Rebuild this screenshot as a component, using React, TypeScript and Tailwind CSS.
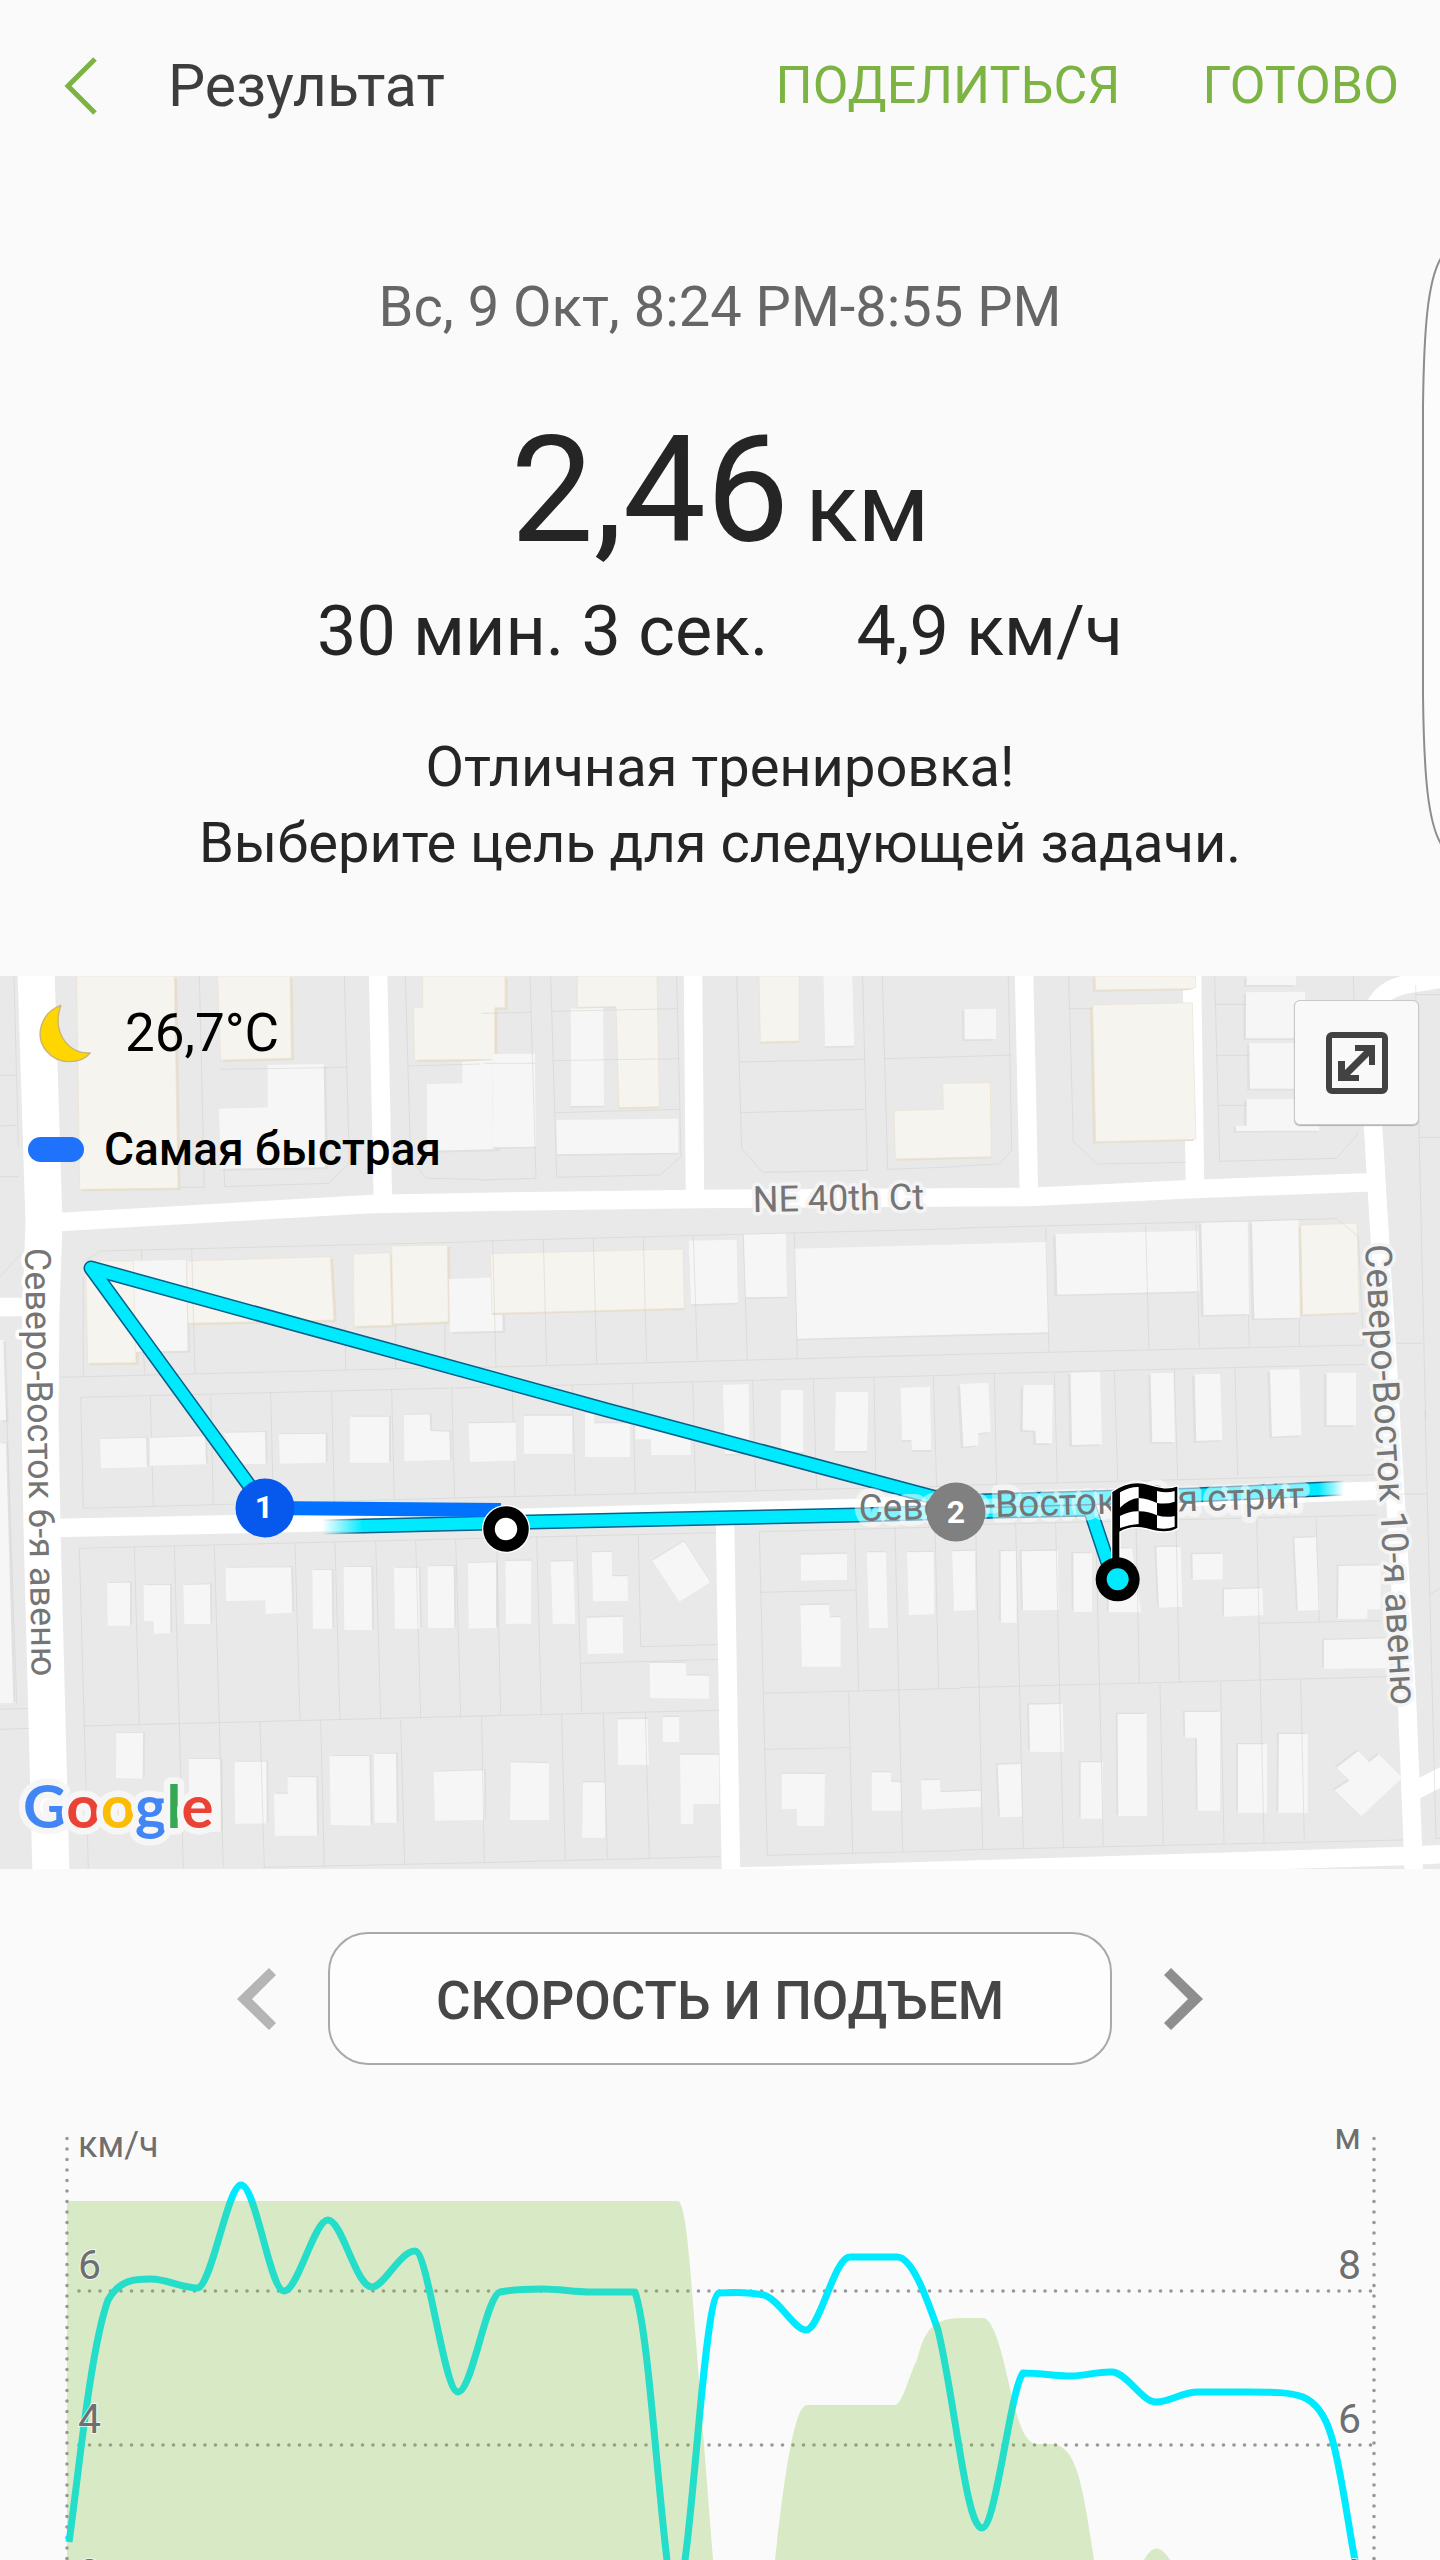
type Tile = {
  x: number;
  y: number;
  shadow: string;
  plain: string[];
  warm: string[];
  parcels: string;
};

/* Map data, stored per tile at three units to a map pixel. */
const tiles: Tile[] = [
  {
    x: 0,
    y: 960,
    shadow: "translate(8 6)",
    plain: [
      "803,315 971,312 976,622 662,626 657,446 803,442",
      "1387,305 1486,300 1490,568 1281,572 1281,372 1387,370",
      "400,903 558,900 563,1172 405,1175",
      "1347,957 1505,952 1508,1112 1350,1116",
      "0,1140 10,1140 18,1380 0,1380",
    ],
    warm: [
      "230,48 523,48 534,684 239,688",
      "653,48 870,48 874,295 662,300",
      "1268,48 1515,48 1515,143 1484,143 1484,298 1243,300 1241,143 1268,142",
      "560,903 991,890 1002,1080 564,1090",
      "257,903 400,903 408,1208 263,1210",
      "1060,882 1170,878 1176,1096 1062,1099",
      "1175,858 1342,855 1345,1085 1180,1092",
    ],
    parcels:
      "M42 48L55 560M0 346H48M0 498L50 496M0 650H55M60 885L0 950M598 48L613 682H540M662 328L1040 322M1033 48L1048 610L985 670L674 680L672 626M1216 48L1232 600L1280 655L1440 658M1225 318L1440 312M250 950V1245M260 900L300 873L1440 845M425 870V903M430 1175L435 1245M575 865L585 1240M1035 1100L1037 1230M1187 1090V1225M1335 1090V1220M180 1252L1440 1220M242 1312L1440 1282M242 1312L250 1645M451 1308L460 1640M632 1303L640 1635M812 1298L820 1630M995 1292L1003 1625M1175 1287L1183 1618M1355 1284L1364 1615M250 1645L1440 1612",
  },
  {
    x: 480,
    y: 960,
    shadow: "translate(0 5)",
    plain: [
      "36,282 165,281 168,560 39,562",
      "272,146 370,144 372,437 273,438",
      "229,480 595,476 595,578 231,583",
      "1030,48 1117,48 1123,257 1035,259",
      "626,842 770,839 774,1028 633,1033",
      "790,822 918,820 921,1010 796,1012",
      "942,866 1700,846 1706,1117 952,1136",
      "728,1275 806,1272 809,1480 735,1482",
      "902,1290 969,1290 970,1476 903,1478",
      "1067,1296 1165,1296 1162,1473 1064,1473",
      "1262,1283 1350,1280 1354,1470 1296,1470 1294,1440 1266,1440",
    ],
    warm: [
      "292,48 531,48 538,440 417,443 408,140 292,142",
      "837,48 958,48 958,243 841,246",
      "1388,370 1531,368 1534,590 1246,597 1242,452 1390,448",
      "31,881 609,867 613,1045 36,1060",
    ],
    parcels:
      "M150 48L168 655L0 660M212 48L230 652L540 645L603 590L590 48M218 154L590 146M220 302L597 296M228 458L598 448M5 160L155 157M10 310H165M770 48L785 565L848 637L1162 631L1148 48M1207 48L1223 628L1440 620M780 306L1155 298M783 458L1155 448M1213 296L1440 290M0 843L1440 806M38 843L48 1220M190 840L200 1215M340 836L350 1212M490 832L500 1206M640 828L652 1200M790 824L802 1198M943 820L952 1195M0 1222L1440 1183M0 1282L1440 1245M97 1280L105 1612M277 1275L286 1606M458 1270L466 1600M638 1266L647 1597M818 1261L827 1592M1000 1257L1010 1588M1182 1252L1188 1583M1360 1249L1370 1580M0 1612L1440 1578",
  },
  {
    x: 960,
    y: 960,
    shadow: "translate(-8 5)",
    plain: [
      "13,148 108,146 108,237 14,238",
      "860,48 1008,48 1008,75 860,75",
      "858,97 1035,95 1035,235 858,235",
      "868,249 1060,249 1060,386 870,386",
      "860,417 1078,417 1078,512 828,513 828,497 860,497",
      "287,822 715,812 718,994 292,1004",
      "724,788 863,785 867,1062 731,1065",
      "876,785 1015,780 1020,1073 883,1076",
      "0,1272 85,1268 92,1415 55,1420 55,1456 10,1460",
      "190,1275 279,1275 276,1450 228,1450 226,1412 188,1410",
      "332,1238 420,1236 426,1453 336,1455",
      "572,1240 640,1238 645,1446 577,1446",
      "704,1243 780,1241 787,1440 709,1443",
      "930,1230 1018,1228 1024,1426 936,1430",
      "1100,1238 1188,1238 1188,1396 1100,1396",
    ],
    warm: [
      "405,48 707,48 707,82 690,86 407,90",
      "398,135 697,128 708,538 407,545",
      "1022,795 1191,790 1198,1058 1028,1064",
    ],
    parcels:
      "M145 48L155 570L118 612L0 618M0 290L152 285M326 48L340 545L412 612L678 607M328 146H395M764 48L779 604L1130 595L1195 520M766 133H860M770 286H868M774 436H860M1180 48L1182 120M1367 75L1397 1380M1367 104H1440M1380 532H1440M1310 1150H1388M0 804L1130 776L1195 830L1210 1150M257 803L267 1175M557 795L567 1168M708 790L718 1162M865 1065L868 1160M1018 1070V1158M0 1183L1210 1155M0 1243L1215 1213M103 1242L110 1575M283 1238L292 1570M463 1232L473 1560M643 1228L653 1555M825 1225L833 1548M0 1576L1250 1544",
  },
  {
    x: 0,
    y: 1410,
    shadow: "translate(6 -3)",
    plain: [
      "0,100 18,100 40,878 0,880",
      "300,87 438,83 441,172 303,175",
      "450,83 615,78 618,163 450,167",
      "670,68 795,66 797,162 720,162",
      "837,73 977,71 977,158 840,161",
      "1050,20 1167,20 1167,158 1050,158",
      "1212,15 1289,13 1291,63 1348,65 1350,150 1213,153",
      "322,519 390,518 390,647 323,647",
      "431,525 510,525 511,670 462,671 461,634 432,633",
      "550,525 630,523 631,642 553,642",
      "677,473 873,472 877,608 797,612 796,571 678,573",
      "937,480 995,480 997,656 939,656",
      "1031,471 1114,471 1116,660 1033,660",
      "1182,473 1256,473 1260,656 1185,656",
      "1283,469 1361,468 1363,654 1284,655",
      "1404,460 1488,457 1488,654 1406,656",
      "349,970 429,968 428,1106 348,1104",
      "566,1047 662,1047 662,1265 570,1265",
      "704,1055 799,1055 800,1240 705,1241",
      "863,1102 949,1102 951,1277 825,1277 822,1151 863,1151",
      "989,1038 1108,1038 1112,1247 992,1245",
      "1122,1031 1188,1031 1190,1238 1124,1238",
      "1301,1085 1452,1081 1453,1230 1305,1232",
    ],
    warm: [],
    parcels:
      "M20 0L50 880M0 898L85 895M0 958L88 955M238 415L1440 385M238 415L265 1376M403 412L418 943M523 410L550 1376M643 407L670 1372M885 402L900 928M1005 398L1020 928M1127 394L1142 924M1247 390L1262 922M1367 388L1382 920M252 948L1440 918M780 935L793 1372M962 932L973 1368M1202 930L1214 1362M790 1372L1440 1358",
  },
  {
    x: 480,
    y: 1410,
    shadow: "translate(0 -4)",
    plain: [
      "-35,40 107,38 109,152 -30,156",
      "132,17 277,17 277,131 132,131",
      "315,10 343,10 343,40 450,40 450,141 315,141",
      "466,40 632,75 632,135 514,135 512,88 466,88",
      "76,453 154,452 154,641 77,641",
      "212,455 280,453 286,641 218,641",
      "335,427 395,426 397,499 443,499 444,573 339,574",
      "517,452 612,394 691,517 598,575",
      "320,623 428,620 430,730 323,732",
      "509,759 617,759 620,796 687,797 688,866 510,864",
      "413,928 503,927 507,1065 414,1065",
      "548,921 598,921 598,996 548,996",
      "600,1034 718,1034 717,1181 640,1183 640,1242 602,1242",
      "92,1057 207,1060 207,1230 90,1230",
      "309,1117 375,1117 375,1283 306,1283",
      "962,434 1101,431 1101,509 963,512",
      "1160,427 1218,427 1224,653 1167,655",
      "1281,427 1361,426 1363,613 1286,615",
      "961,586 1046,584 1051,622 1082,622 1082,770 966,770",
      "1416,424 1485,422 1487,600 1422,603",
      "905,1091 1035,1092 1033,1248 950,1248 950,1197 905,1197",
      "1175,1087 1232,1087 1234,1115 1263,1117 1263,1202 1175,1202",
      "1323,1111 1380,1110 1382,1147 1502,1142 1502,1190 1326,1199",
    ],
    warm: [],
    parcels:
      "M50 383L62 915M170 380L184 912M290 378L305 907M0 385L708 368M475 375L482 710L713 704M300 760L713 748M0 918L716 901M5 918L13 1358M245 915L256 1352M370 912L382 1348M496 908L508 1345M0 1358L720 1340M838 365L862 1336L1440 1322M838 365L1440 350M842 547L1130 540M1124 355L1136 840M1245 352L1268 1325M1365 350L1376 836M850 850L1440 835M1106 848L1118 1330M855 1018L1112 1013",
  },
  {
    x: 960,
    y: 1410,
    shadow: "translate(-6 -4)",
    plain: [
      "122,424 168,423 170,638 123,638",
      "185,424 294,422 296,600 189,601",
      "340,430 396,430 396,605 341,606",
      "480,415 516,415 543,607 446,607 446,540",
      "589,411 662,410 667,590 597,593",
      "697,433 788,431 788,508 699,509",
      "792,538 907,535 910,616 792,620",
      "1003,384 1068,382 1080,600 1014,602",
      "1136,468 1262,466 1262,597 1222,599 1222,626 1134,626",
      "1092,690 1290,685 1290,775 1092,776",
      "207,884 308,882 312,1026 210,1025",
      "113,1064 182,1062 186,1220 120,1222",
      "362,1057 428,1057 428,1226 362,1226",
      "473,912 560,912 561,1218 475,1218",
      "674,906 780,906 780,1202 713,1202 711,984 676,983",
      "834,1003 921,1003 921,1208 834,1208",
      "957,972 1043,972 1043,1209 955,1209",
      "1195,1023 1228,1057 1257,1033 1327,1103 1204,1219 1123,1141 1168,1112 1130,1073",
    ],
    warm: [],
    parcels:
      "M0 345L1250 315M47 345L68 1318M167 342L190 1314M287 340L310 1312M407 336L430 1308M528 334L538 820M648 331L658 818M890 326L912 1298M1068 322L1078 635M900 640L1262 632M0 833L1290 800M600 822L610 1302M782 816L792 1298M1022 810L1033 1294M0 1320L1330 1290M1395 0L1428 1285H1440M1250 252H1400M1410 552L1440 535",
  },
];

const streets = [
  "M60 1222L372 1204L480 1202L700 1199L1029 1197L1195 1189L1378 1182",
  "M378 970L383 1204",
  "M693 970L695 1199",
  "M1024 970L1029 1197",
  "M1192 970L1195 1189",
  "M1445 978L1408 984C1384 989 1373 1000 1373 1020L1373 1125L1377 1192L1391 1420L1407 1700L1414 1875",
  "M1410 1793L1445 1775",
  "M55 1528L480 1519L857 1508L1395 1490",
  "M725 1520L731 1875",
  "M725 1877L960 1870L1404 1856L1445 1854",
  "M-5 1307H24",
];

const legs = [
  "M322 1527L530 1522L857 1515L956 1512L1090 1509L1112 1575",
  "M265 1507L91 1268L607 1410L933 1497L980 1501L1193 1495L1346 1488",
];

function MapCanvas() {
  return (
    <svg viewBox="0 976 1440 893" className="block w-full bg-[#e9e9e9] font-[Roboto,sans-serif]" role="img" aria-label="Карта маршрута">
      <defs>
        <linearGradient id="routeFade" gradientUnits="userSpaceOnUse" x1="322" y1="0" x2="1344" y2="0">
          <stop offset="0" stopColor="#fff" stopOpacity="0" />
          <stop offset="0.04" stopColor="#fff" />
          <stop offset="0.975" stopColor="#fff" />
          <stop offset="1" stopColor="#fff" stopOpacity="0" />
        </linearGradient>
        <mask id="routeMask" maskUnits="userSpaceOnUse" x="0" y="976" width="1440" height="893">
          <rect x="0" y="976" width="1440" height="474" fill="#fff" />
          <rect x="0" y="1450" width="310" height="150" fill="#fff" />
          <rect x="310" y="1450" width="1130" height="150" fill="url(#routeFade)" />
        </mask>
      </defs>

      <g fill="none" stroke="#fff" strokeWidth="18.5">
        <path strokeWidth="37" d="M36 970L44 1222L41 1310L40 1420L42 1528L51 1875" />
        {streets.map((d) => (
          <path key={d} d={d} />
        ))}
      </g>

      {tiles.map((t) => (
        <g key={`${t.x}-${t.y}`} transform={`translate(${t.x} ${t.y}) scale(0.33333)`}>
          <g fill="#e0e0e0" transform={t.shadow}>
            {t.plain.map((p) => (
              <polygon key={p} points={p} />
            ))}
          </g>
          <g fill="#e6dfd0" transform={t.shadow}>
            {t.warm.map((p) => (
              <polygon key={p} points={p} />
            ))}
          </g>
          <g fill="#f6f6f6">
            {t.plain.map((p) => (
              <polygon key={p} points={p} />
            ))}
          </g>
          <g fill="#f6f4ef" stroke="#ece3d0" strokeWidth="2">
            {t.warm.map((p) => (
              <polygon key={p} points={p} />
            ))}
          </g>
          <path d={t.parcels} fill="none" stroke="#cfcfc9" strokeOpacity="0.5" strokeWidth="3" />
        </g>
      ))}

      <g fill="none" strokeLinejoin="round" mask="url(#routeMask)">
        {legs.map((d) => (
          <g key={d}>
            <path d={d} stroke="#05608a" strokeWidth="15" />
            <path d={d} stroke="#00eaff" strokeWidth="12" />
          </g>
        ))}
      </g>
      <path d="M265 1508L501 1510" fill="none" stroke="#0072ff" strokeWidth="14" />

      <g fill="#757575" fontSize="37" stroke="#fff" strokeWidth="7" strokeLinejoin="round" paintOrder="stroke">
        <text x="753" y="1212" fontSize="36" stroke="#f4f4f4" transform="rotate(-1 753 1212)">NE 40th Ct</text>
        <text x="25" y="1248" fontSize="36" transform="rotate(89.1 25 1248)">Северо-Восток 6-я авеню</text>
        <text x="1365" y="1245" stroke="#f4f4f4" transform="rotate(86.7 1365 1245)">Северо-Восток 10-я авеню</text>
        <text x="859" y="1521" strokeWidth="12" strokeOpacity="0.5" transform="rotate(-1.7 859 1521)">Северо-Восток 39-я стрит</text>
      </g>

      <circle cx="265" cy="1508" r="29.5" fill="#0659ec" />
      <circle cx="956" cy="1512" r="29.5" fill="#808080" />
      <g fill="#fff" fontSize="32" fontWeight="700" textAnchor="middle">
        <text x="264" y="1518">1</text>
        <text x="956" y="1523">2</text>
      </g>

      <circle cx="506" cy="1529" r="17" fill="#fff" stroke="#fff" strokeWidth="14" />
      <circle cx="506" cy="1529" r="17" fill="#fff" stroke="#000" strokeWidth="11.5" />

      <g transform="translate(960 1410) scale(0.33333)">
        <path
          d="M455 450V245Q500 212 550 219C590 228 612 242 654 227V355Q620 376 560 357Q515 345 480 366V450Z"
          fill="#000"
          stroke="#fff"
          strokeWidth="4"
        />
        <g fill="#fff">
          <path d="M480 247Q510 230 536 231V264Q508 266 480 293Z" />
          <path d="M591 243Q620 250 644 243V275Q618 284 591 279Z" />
          <path d="M536 264Q562 266 591 279V316Q562 303 536 304Z" />
          <path d="M480 318Q508 303 536 304V342Q508 344 480 354Z" />
          <path d="M591 316Q618 324 644 318V350Q618 360 591 354Z" />
        </g>
        <circle cx="473" cy="508" r="66" fill="#000" />
        <circle cx="473" cy="508" r="33" fill="#00eaff" />
      </g>

      <text x="23" y="1828" fontSize="60" fontFamily="Lato, sans-serif" fontWeight="700" stroke="#f6f6f6" strokeWidth="13" strokeLinejoin="round" paintOrder="stroke">
        <tspan fill="#4285f4">G</tspan>
        <tspan fill="#ea4335">o</tspan>
        <tspan fill="#fbbc05">o</tspan>
        <tspan fill="#4285f4">g</tspan>
        <tspan fill="#34a853">l</tspan>
        <tspan fill="#ea4335">e</tspan>
      </text>
    </svg>
  );
}

function RouteMap() {
  return (
    <section className="relative mt-[95px]">
      <MapCanvas />
      <div className="absolute left-7 top-6 flex flex-col gap-[51px] text-black">
        <div className="flex items-center gap-8">
          <svg viewBox="0 0 60 66" className="ml-2 h-[66px] w-[57px]" aria-hidden="true">
            <path
              d="M26 4C5 12-2 36 11 52C24 68 48 65 57 54C36 56 16 34 26 4Z"
              fill="#ffd600"
              stroke="#c9b673"
              strokeWidth="1.5"
              strokeLinejoin="round"
            />
          </svg>
          <span className="text-[53px] leading-[64px]">26,7°C</span>
        </div>
        <div className="flex items-center gap-5">
          <span className="h-[25px] w-14 rounded-full bg-[#1f72fb]" />
          <span className="text-[46px] font-medium leading-[64px]">Самая быстрая</span>
        </div>
      </div>
      <button
        type="button"
        aria-label="Развернуть карту"
        className="absolute right-[21px] top-6 flex size-[125px] items-center justify-center rounded-md border border-[#c8c8c8] bg-[#f9f9f9] shadow-[0_1px_1px_#b0b0b0]"
      >
        <svg viewBox="0 0 62 62" className="size-[62px]" aria-hidden="true">
          <rect x="3" y="3" width="56" height="56" rx="3" fill="none" stroke="#424242" strokeWidth="6" />
          <path d="M29 13H49V33H43V24L24 43H33V49H12V29H19V38L38 19H29Z" fill="#424242" />
        </svg>
      </button>
    </section>
  );
}

function Chart() {
  return (
    <svg viewBox="0 2100 1440 460" className="mt-[35px] block w-full font-[Roboto,sans-serif]" role="img" aria-label="Скорость и подъем">
      <g fill="none" stroke="#979797" strokeWidth="3.6" strokeLinecap="round" strokeDasharray="0 10.5">
        <path d="M67 2138.500V2570" />
        <path d="M1374 2138.500V2570" />
        <path d="M79 2291H1372" />
        <path d="M79 2445H1372" />
      </g>
      <path
        d="M69 2542C78 2480 90 2350 108 2300C120 2279 136 2279 151 2279C168 2279 180 2288 198 2288C212 2284 228 2185 241 2185C256 2185 270 2291 284 2291C298 2291 314 2220 328 2220C342 2220 356 2287 372 2287C384 2287 400 2251 415 2251C428 2251 444 2392 458 2392C472 2392 486 2296 500 2292C514 2289 528 2289 542 2289C560 2289 574 2292 592 2292H635C648 2330 656 2470 667 2560C672 2590 680 2590 685 2560C696 2480 706 2296 719 2293C734 2292 750 2292 764 2295C780 2300 794 2330 806 2330C820 2330 834 2257 850 2257H897C912 2257 926 2296 938 2330C955 2400 966 2528 982 2528C996 2528 1010 2390 1023 2373C1038 2373 1056 2376 1071 2376C1086 2376 1098 2371 1113 2372C1128 2374 1142 2402 1156 2402C1170 2402 1182 2392 1198 2392H1248C1272 2392 1290 2392 1303 2397C1315 2402 1325 2415 1331 2435C1342 2470 1350 2540 1357 2570"
        fill="none"
        stroke="#00eaff"
        strokeWidth="7"
        strokeLinejoin="round"
      />
      <g fill="#81bd3d" fillOpacity="0.28">
        <path d="M67 2201H678C684 2202 688 2240 692 2291L713 2560H67Z" />
        <path d="M775 2560C784 2480 794 2405 807 2405H895C903 2404 910 2372 917 2360C924 2332 932 2318 961 2318H983C992 2318 1000 2345 1005 2367C1012 2395 1020 2444 1037 2444H1052C1076 2446 1082 2480 1094 2560Z" />
        <path d="M1144 2560Q1156 2537 1170 2560Z" />
      </g>
      <g fill="#6f6f6f" stroke="#fff" strokeWidth="2" strokeOpacity="0.7" paintOrder="stroke" fontSize="41">
        <text x="78" y="2157" fontSize="36">км/ч</text>
        <text x="78" y="2279">6</text>
        <text x="78" y="2433">4</text>
        <text x="78" y="2588">2</text>
        <g textAnchor="end">
          <text x="1361" y="2149" fontSize="36">м</text>
          <text x="1361" y="2279">8</text>
          <text x="1361" y="2433">6</text>
          <text x="1361" y="2588">4</text>
        </g>
      </g>
    </svg>
  );
}

export default function App() {
  return (
    <main className="relative w-full overflow-hidden bg-[#fafafa] font-[Roboto,sans-serif] text-[#252525]">
      <header className="flex h-[172px] items-center pl-16 pr-[41px]">
        <button type="button" aria-label="Назад" className="flex">
          <svg viewBox="0 0 34 58" className="h-[58px] w-[34px]" aria-hidden="true">
            <path d="M31 2L4 29L31 56" fill="none" stroke="#7cb342" strokeWidth="5" />
          </svg>
        </button>
        <h1 className="ml-[70px] text-[59px] leading-[72px] text-[#3d3d3d]">Результат</h1>
        <nav className="ml-auto flex gap-[82px] text-[52px] leading-[64px] text-[#7cb342]">
          <button type="button">ПОДЕЛИТЬСЯ</button>
          <button type="button">ГОТОВО</button>
        </nav>
      </header>

      <svg viewBox="0 0 20 590" className="absolute right-0 top-[256px] h-[590px] w-5" aria-hidden="true">
        <path d="M21 2C8 24 4 70 3 150V440C4 520 8 566 21 588" fill="#fcfcfc" stroke="#8d8d8d" strokeWidth="2" />
      </svg>

      <section className="mt-[103px] flex flex-col items-center text-center">
        <p className="text-[56px] leading-[64px] text-[#666]">Вс, 9 Окт, 8:24 PM-8:55 PM</p>
        <p className="mt-[72px] flex items-baseline gap-4 text-[148px] leading-[160px]">
          2,46 <span className="text-[97px] leading-[100px]">км</span>
        </p>
        <p className="mt-5 flex gap-[88px] text-[70px] leading-[80px]">
          <span>30 мин. 3 сек.</span>
          <span>4,9 км/ч</span>
        </p>
        <p className="mt-[58px] text-[56px] leading-[76px]">
          Отличная тренировка!
          <br />
          Выберите цель для следующей задачи.
        </p>
      </section>

      <RouteMap />

      <section className="mt-[63px] flex items-center justify-center gap-[51px]">
        <button type="button" aria-label="Предыдущий график">
          <svg viewBox="0 0 40 64" className="h-16 w-10" aria-hidden="true">
            <path d="M0 32L32 1L39 8L15 32L39 56L32 63Z" fill="#b5b5b5" />
          </svg>
        </button>
        <button
          type="button"
          className="h-[133px] w-[784px] rounded-[40px] border-2 border-[#a9a9a9] bg-[#fdfdfd] pt-1 text-[53px] font-medium leading-[64px] text-[#464646]"
        >
          СКОРОСТЬ И ПОДЪЕМ
        </button>
        <button type="button" aria-label="Следующий график">
          <svg viewBox="0 0 40 64" className="h-16 w-10" aria-hidden="true">
            <path d="M40 32L8 1L1 8L25 32L1 56L8 63Z" fill="#8e8e8e" />
          </svg>
        </button>
      </section>

      <Chart />
    </main>
  );
}
